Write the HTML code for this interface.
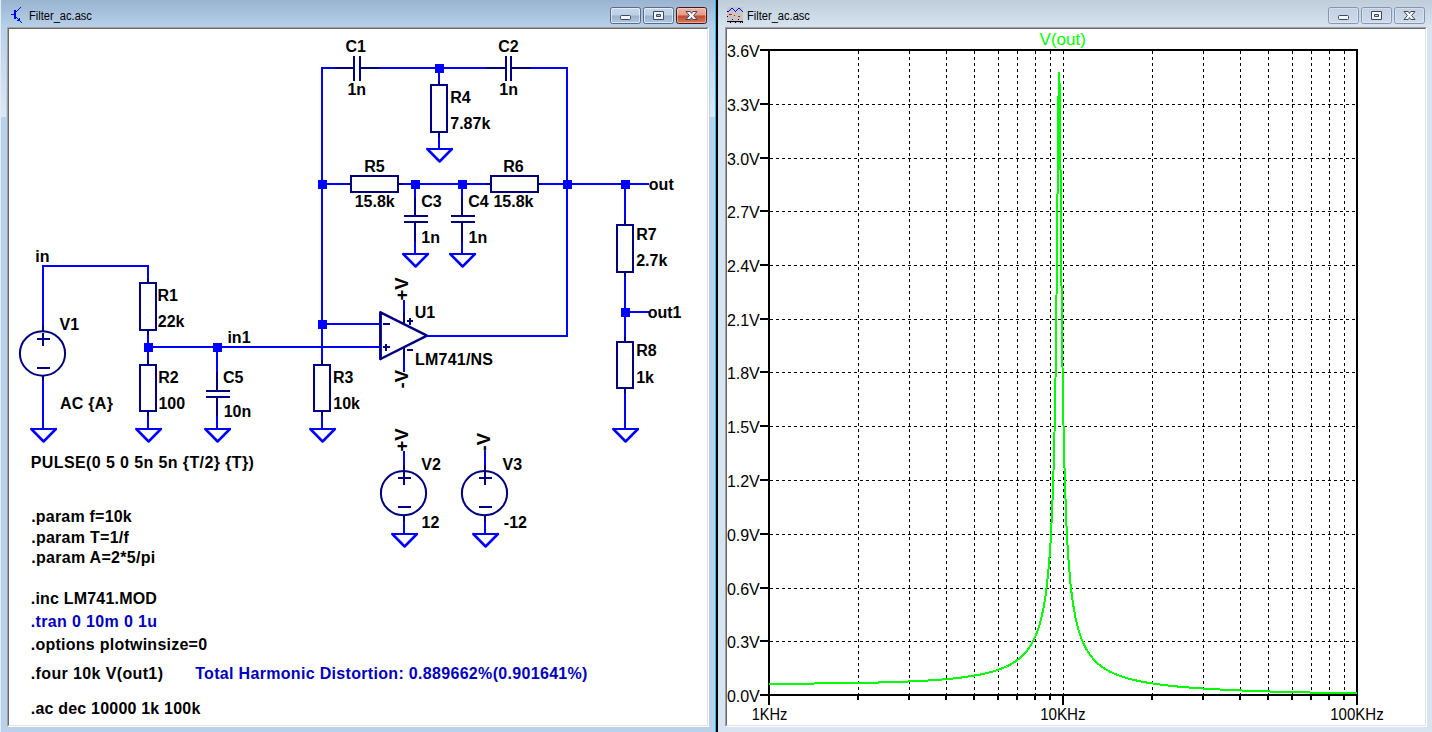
<!DOCTYPE html>
<html><head><meta charset="utf-8"><title>Filter_ac.asc</title>
<style>
html,body{margin:0;padding:0}
body{width:1432px;height:732px;overflow:hidden;position:relative;background:#b9d1ea;font-family:"Liberation Sans",sans-serif}
.win{position:absolute;top:0;height:732px}
.wl{left:0;width:715px;background:linear-gradient(#99b4d1 0,#b9d1ea 28px,#b9d1ea 100%);box-shadow:inset 1px 0 0 #e4edf7}
.wr{left:718px;width:714px;background:linear-gradient(#bfcddb 0,#d7e4f2 28px,#d7e4f2 100%)}
.sep{position:absolute;top:0;height:732px}
.sg{position:absolute;top:28px;width:5px;height:89px;background:linear-gradient(rgba(220,232,245,0),#dce8f5)}
.ttl{position:absolute;top:8px;font-size:12px;line-height:16px;color:#000;white-space:nowrap;transform-origin:0 0;transform:scale(.925,1)}
.cvo{position:absolute;top:27px;height:700px;box-sizing:border-box;border-style:solid;border-width:1px;border-color:#a0a0a0 #fff #fff #a0a0a0}
.cvi{position:absolute;left:0;top:0;right:0;bottom:0;border-style:solid;border-width:1px;border-color:#696969 #e3e3e3 #e3e3e3 #696969;background:#fff;overflow:hidden}
svg{position:absolute;left:0;top:0;display:block}
.sch .t text{font:bold 16px "Liberation Sans",sans-serif;fill:#000}
.sch .t text[fill]{fill:#0000c0}
.sch .t text.rot{font-size:18.5px}
.plt .pl text{font:16px "Liberation Sans",sans-serif}
.btns{position:absolute;top:7px;width:97px;height:17px}
.b{position:absolute;top:0;left:0;width:31px;height:17px;box-sizing:border-box;border:1px solid #5a6b85;border-radius:2.5px;box-shadow:inset 0 0 0 1px rgba(255,255,255,.55);overflow:hidden}
.b.c{width:31px}
.b svg{left:-1px;top:-1px}
.a .b{background:linear-gradient(#c6d6e9 0,#bdd0e6 48%,#99b2cf 52%,#b0c7e1 100%)}
.a .b.c{border-color:#47171f;background:linear-gradient(#eeb4a6 0,#e39a88 48%,#c2492c 52%,#d8785c 100%);box-shadow:inset 0 0 0 1px rgba(255,220,210,.5)}
.i .b{border-color:#8794b0;background:linear-gradient(#c2d0e2,#cedbeb);box-shadow:inset 0 0 0 1px rgba(255,255,255,.3)}
</style></head><body>
<div class="win wl">
<svg width="24" height="24" viewBox="0 0 24 24" style="left:0;top:0" shape-rendering="crispEdges"><g fill="#0000ff"><rect x="14" y="10" width="2" height="9"/><rect x="11" y="14" width="3" height="1"/><rect x="16" y="11" width="1" height="1"/><rect x="17" y="10" width="1" height="1"/><rect x="18" y="9" width="1" height="1"/><rect x="19" y="8" width="1" height="1"/><rect x="20" y="7" width="1" height="1"/><rect x="16" y="17" width="1" height="1"/><rect x="17" y="18" width="1" height="1"/><rect x="18" y="19" width="1" height="1"/><rect x="19" y="20" width="1" height="1"/><rect x="20" y="21" width="1" height="1"/><rect x="21" y="22" width="1" height="1"/><rect x="19" y="18" width="1" height="1"/><rect x="19" y="19" width="1" height="1"/><rect x="18" y="20" width="1" height="1"/><rect x="17" y="20" width="1" height="1"/></g></svg>
<div class="ttl" style="left:29px">Filter_ac.asc</div>
<div class="btns a" style="left:610px">
<div class="b"><svg width="30" height="17" viewBox="0 0 30 17"><rect x="10.5" y="8.5" width="10" height="4" rx="1" fill="#f4f6f9" stroke="#3c4a60"/></svg></div>
<div class="b" style="left:33px"><svg width="30" height="17" viewBox="0 0 30 17"><path d="M10.5 4.5h10v8h-10z M13.5 7.5h4v2h-4z" fill="#f4f6f9" fill-rule="evenodd" stroke="#3c4a60" stroke-linejoin="round"/></svg></div>
<div class="b c" style="left:66px"><svg width="31" height="17" viewBox="0 0 31 17"><path d="M10 4.5h4.2l1.3 1.9 1.3-1.9h4.2l-3.4 4 3.4 4h-4.2l-1.3-1.9-1.3 1.9h-4.2l3.4-4z" fill="#f4f6f9" stroke="#3c4a60" stroke-linejoin="round"/></svg></div>
</div>
<div class="sg" style="left:1px"></div><div class="sg" style="left:710px"></div>
<div class="cvo" style="left:7px;width:702px"><div class="cvi"><svg class="sch" width="698" height="696" viewBox="9 29 698 696">
<g stroke="#000080" stroke-width="2" fill="none" shape-rendering="crispEdges" stroke-linecap="butt">
<line x1="334" y1="68" x2="355" y2="68"/>
<line x1="360" y1="68" x2="381" y2="68"/>
<line x1="354" y1="56" x2="354" y2="81"/>
<line x1="360" y1="56" x2="360" y2="81"/>
<line x1="485" y1="68" x2="507" y2="68"/>
<line x1="511" y1="68" x2="533" y2="68"/>
<line x1="506" y1="56" x2="506" y2="81"/>
<line x1="511" y1="56" x2="511" y2="81"/>
<line x1="439" y1="80" x2="439" y2="86"/>
<line x1="439" y1="132" x2="439" y2="139"/>
<line x1="346" y1="184" x2="352" y2="184"/>
<line x1="398" y1="184" x2="405" y2="184"/>
<line x1="485" y1="184" x2="492" y2="184"/>
<line x1="538" y1="184" x2="544" y2="184"/>
<line x1="415" y1="196" x2="415" y2="217"/>
<line x1="415" y1="222" x2="415" y2="244"/>
<line x1="404" y1="216" x2="428" y2="216"/>
<line x1="404" y1="222" x2="428" y2="222"/>
<line x1="462" y1="196" x2="462" y2="217"/>
<line x1="462" y1="222" x2="462" y2="244"/>
<line x1="451" y1="216" x2="475" y2="216"/>
<line x1="451" y1="222" x2="475" y2="222"/>
<line x1="625" y1="219" x2="625" y2="226"/>
<line x1="625" y1="272" x2="625" y2="279"/>
<line x1="625" y1="336" x2="625" y2="343"/>
<line x1="625" y1="388" x2="625" y2="395"/>
<line x1="383" y1="324" x2="390" y2="324"/>
<line x1="383" y1="347" x2="390" y2="347"/>
<line x1="386" y1="344" x2="386" y2="351"/>
<line x1="404" y1="312" x2="404" y2="325"/>
<line x1="404" y1="347" x2="404" y2="360"/>
<line x1="407" y1="321" x2="413" y2="321"/>
<line x1="410" y1="318" x2="410" y2="325"/>
<line x1="407" y1="350" x2="413" y2="350"/>
<line x1="322" y1="359" x2="322" y2="366"/>
<line x1="322" y1="411" x2="322" y2="418"/>
<line x1="43" y1="324" x2="43" y2="332"/>
<line x1="43" y1="376" x2="43" y2="383"/>
<line x1="37" y1="339" x2="50" y2="339"/>
<line x1="43" y1="333" x2="43" y2="346"/>
<line x1="37" y1="368" x2="50" y2="368"/>
<line x1="148" y1="278" x2="148" y2="284"/>
<line x1="148" y1="330" x2="148" y2="337"/>
<line x1="148" y1="359" x2="148" y2="366"/>
<line x1="148" y1="411" x2="148" y2="418"/>
<line x1="217" y1="371" x2="217" y2="392"/>
<line x1="217" y1="397" x2="217" y2="418"/>
<line x1="206" y1="391" x2="230" y2="391"/>
<line x1="206" y1="397" x2="230" y2="397"/>
<line x1="404" y1="464" x2="404" y2="472"/>
<line x1="404" y1="516" x2="404" y2="523"/>
<line x1="398" y1="478" x2="411" y2="478"/>
<line x1="404" y1="472" x2="404" y2="485"/>
<line x1="398" y1="507" x2="411" y2="507"/>
<line x1="485" y1="464" x2="485" y2="472"/>
<line x1="485" y1="516" x2="485" y2="523"/>
<line x1="479" y1="478" x2="492" y2="478"/>
<line x1="485" y1="472" x2="485" y2="485"/>
<line x1="479" y1="507" x2="492" y2="507"/>
<rect x="431" y="85" width="16" height="47"/>
<rect x="351" y="176" width="47" height="16"/>
<rect x="491" y="176" width="47" height="16"/>
<rect x="617" y="225" width="16" height="47"/>
<rect x="617" y="342" width="16" height="46"/>
<rect x="314" y="365" width="16" height="46"/>
<rect x="140" y="283" width="16" height="47"/>
<rect x="140" y="365" width="16" height="46"/>
</g>
<g stroke="#000080" stroke-width="2" fill="none">
<ellipse cx="42.5" cy="353.48" rx="22.60" ry="22.15"/>
<ellipse cx="403.5" cy="493.16" rx="22.60" ry="22.15"/>
<ellipse cx="484.5" cy="493.16" rx="22.60" ry="22.15"/>
</g>
<g stroke-width="2.5" fill="none" stroke-linejoin="round" stroke-linecap="round">
<polyline stroke="#0000ff" points="427.30,149.00 439.60,161.50 451.90,149.00"/>
<polyline stroke="#0000ff" points="403.30,254.00 415.60,266.50 427.90,254.00"/>
<polyline stroke="#0000ff" points="450.30,254.00 462.60,266.50 474.90,254.00"/>
<polyline stroke="#0000ff" points="613.30,429.00 625.60,441.50 637.90,429.00"/>
<polyline stroke="#000080" points="380.45,312.44 427.01,335.72 380.45,359.00 380.45,312.44"/>
<polyline stroke="#000080" points="380.45,312.44 380.45,359.00"/>
<polyline stroke="#0000ff" points="310.30,429.00 322.60,441.50 334.90,429.00"/>
<polyline stroke="#0000ff" points="31.30,429.00 43.60,441.50 55.90,429.00"/>
<polyline stroke="#0000ff" points="136.30,429.00 148.60,441.50 160.90,429.00"/>
<polyline stroke="#0000ff" points="205.30,429.00 217.60,441.50 229.90,429.00"/>
<polyline stroke="#0000ff" points="392.30,534.00 404.60,546.50 416.90,534.00"/>
<polyline stroke="#0000ff" points="473.30,534.00 485.60,546.50 497.90,534.00"/>
</g>
<g stroke="#0000ff" stroke-width="2" fill="none" shape-rendering="crispEdges" stroke-linecap="butt">
<line x1="321" y1="68" x2="335" y2="68"/>
<line x1="379" y1="68" x2="486" y2="68"/>
<line x1="531" y1="68" x2="568" y2="68"/>
<line x1="322" y1="67" x2="322" y2="360"/>
<line x1="567" y1="67" x2="567" y2="337"/>
<line x1="439" y1="67" x2="439" y2="81"/>
<line x1="439" y1="137" x2="439" y2="150"/>
<line x1="427" y1="149" x2="453" y2="149"/>
<line x1="321" y1="184" x2="347" y2="184"/>
<line x1="403" y1="184" x2="486" y2="184"/>
<line x1="542" y1="184" x2="649" y2="184"/>
<line x1="415" y1="183" x2="415" y2="197"/>
<line x1="415" y1="242" x2="415" y2="255"/>
<line x1="403" y1="254" x2="429" y2="254"/>
<line x1="462" y1="183" x2="462" y2="197"/>
<line x1="462" y1="242" x2="462" y2="255"/>
<line x1="450" y1="254" x2="476" y2="254"/>
<line x1="625" y1="183" x2="625" y2="220"/>
<line x1="625" y1="277" x2="625" y2="337"/>
<line x1="625" y1="393" x2="625" y2="430"/>
<line x1="613" y1="429" x2="639" y2="429"/>
<line x1="624" y1="312" x2="649" y2="312"/>
<line x1="404" y1="300" x2="404" y2="313"/>
<line x1="404" y1="358" x2="404" y2="372"/>
<line x1="321" y1="324" x2="381" y2="324"/>
<line x1="147" y1="347" x2="381" y2="347"/>
<line x1="426" y1="336" x2="568" y2="336"/>
<line x1="322" y1="416" x2="322" y2="430"/>
<line x1="310" y1="429" x2="336" y2="429"/>
<line x1="42" y1="266" x2="149" y2="266"/>
<line x1="43" y1="265" x2="43" y2="325"/>
<line x1="43" y1="381" x2="43" y2="430"/>
<line x1="31" y1="429" x2="57" y2="429"/>
<line x1="148" y1="265" x2="148" y2="279"/>
<line x1="148" y1="335" x2="148" y2="360"/>
<line x1="148" y1="416" x2="148" y2="430"/>
<line x1="136" y1="429" x2="162" y2="429"/>
<line x1="217" y1="346" x2="217" y2="372"/>
<line x1="217" y1="416" x2="217" y2="430"/>
<line x1="205" y1="429" x2="231" y2="429"/>
<line x1="404" y1="451" x2="404" y2="465"/>
<line x1="404" y1="521" x2="404" y2="535"/>
<line x1="392" y1="534" x2="418" y2="534"/>
<line x1="485" y1="451" x2="485" y2="465"/>
<line x1="485" y1="521" x2="485" y2="535"/>
<line x1="473" y1="534" x2="499" y2="534"/>
</g>
<g fill="#0000ff" shape-rendering="crispEdges">
<rect x="435" y="64" width="9" height="9"/>
<rect x="318" y="180" width="9" height="9"/>
<rect x="411" y="180" width="9" height="9"/>
<rect x="458" y="180" width="9" height="9"/>
<rect x="563" y="180" width="9" height="9"/>
<rect x="621" y="180" width="9" height="9"/>
<rect x="621" y="308" width="9" height="9"/>
<rect x="318" y="320" width="9" height="9"/>
<rect x="144" y="343" width="9" height="9"/>
<rect x="213" y="343" width="9" height="9"/>
</g>
<g class="t">
<text id="t0" x="345.48" y="52.0">C1</text>
<text id="t1" x="347.46" y="95.0">1n</text>
<text id="t2" x="498.30" y="52.0">C2</text>
<text id="t3" x="499.34" y="95.0">1n</text>
<text id="t4" x="450.17" y="103.0">R4</text>
<text id="t5" x="450.24" y="129.0">7.87k</text>
<text id="t6" x="364.26" y="172.0">R5</text>
<text id="t7" x="354.67" y="207.0">15.8k</text>
<text id="t8" x="503.13" y="172.0">R6</text>
<text id="t9" x="493.45" y="207.0">15.8k</text>
<text id="t10" x="421.25" y="207.0">C3</text>
<text id="t11" x="468.15" y="207.0">C4</text>
<text id="t12" x="421.24" y="243.0">1n</text>
<text id="t13" x="468.50" y="243.0">1n</text>
<text id="t14" x="636.20" y="240.0">R7</text>
<text id="t15" x="636.18" y="266.0">2.7k</text>
<text id="t16" x="648.83" y="190.0">out</text>
<text id="t17" x="647.74" y="318.0">out1</text>
<text id="t18" x="414.65" y="318.0">U1</text>
<text id="t19" x="414.97" y="365.0" textLength="78.03" lengthAdjust="spacing">LM741/NS</text>
<text id="t20" x="332.90" y="383.0">R3</text>
<text id="t21" x="333.28" y="409.0">10k</text>
<text id="t22" x="636.22" y="356.0">R8</text>
<text id="t23" x="636.18" y="383.0">1k</text>
<text id="t24" x="35.31" y="262.0">in</text>
<text id="t25" x="59.56" y="330.0">V1</text>
<text id="t26" x="59.92" y="409.0" textLength="52.95" lengthAdjust="spacing">AC {A}</text>
<text id="t27" x="157.52" y="301.0">R1</text>
<text id="t28" x="157.74" y="327.0">22k</text>
<text id="t29" x="227.43" y="343.0">in1</text>
<text id="t30" x="158.25" y="383.0">R2</text>
<text id="t31" x="158.40" y="409.0">100</text>
<text id="t32" x="222.95" y="383.0">C5</text>
<text id="t33" x="223.66" y="417.0">10n</text>
<text id="t34" x="421.33" y="470.0">V2</text>
<text id="t35" x="421.59" y="528.0">12</text>
<text id="t36" x="502.53" y="470.0">V3</text>
<text id="t37" x="503.81" y="528.0">-12</text>
<text id="t38" x="30.77" y="468.0" textLength="223.16" lengthAdjust="spacing">PULSE(0 5 0 5n 5n {T/2} {T})</text>
<text id="t39" x="31.16" y="522.0" textLength="100.60" lengthAdjust="spacing">.param f=10k</text>
<text id="t40" x="31.16" y="543.0" textLength="97.72" lengthAdjust="spacing">.param T=1/f</text>
<text id="t41" x="31.16" y="563.0" textLength="124.09" lengthAdjust="spacing">.param A=2*5/pi</text>
<text id="t42" x="30.80" y="604.0" textLength="126.09" lengthAdjust="spacing">.inc LM741.MOD</text>
<text id="t43" x="30.80" y="627.0" textLength="126.29" lengthAdjust="spacing" fill="#0000c0">.tran 0 10m 0 1u</text>
<text id="t44" x="30.80" y="650.0" textLength="176.31" lengthAdjust="spacing">.options plotwinsize=0</text>
<text id="t45" x="30.80" y="679.0" textLength="132.17" lengthAdjust="spacing">.four 10k V(out1)</text>
<text id="t46" x="195.16" y="679.0" textLength="392.28" lengthAdjust="spacing" fill="#0000c0">Total Harmonic Distortion: 0.889662%(0.901641%)</text>
<text id="t47" x="30.80" y="714.0" textLength="169.52" lengthAdjust="spacing">.ac dec 10000 1k 100k</text>
<text id="r0" class="rot" transform="translate(408.4,300.6) rotate(-90)">+V</text>
<text id="r1" class="rot" transform="translate(408.4,388.5) rotate(-90)">-V</text>
<text id="r2" class="rot" transform="translate(408.2,451.6) rotate(-90)">+V</text>
<text id="r3" class="rot" transform="translate(489.6,451.5) rotate(-90)">-V</text>
</g>
</svg></div></div>
</div>
<div class="sep" style="left:715px;width:1px;background:#1fbdf0"></div>
<div class="sep" style="left:716px;width:2px;background:#000"></div>
<div class="win wr">
<svg width="16" height="16" viewBox="0 0 16 16" style="left:9px;top:7px" shape-rendering="crispEdges"><rect width="16" height="16" fill="#c6c6c6"/><g fill="#0000ff"><rect x="1" y="4" width="1" height="1"/><rect x="2" y="3" width="1" height="1"/><rect x="3" y="2" width="1" height="1"/><rect x="4" y="1" width="1" height="1"/><rect x="5" y="1" width="1" height="1"/><rect x="6" y="2" width="1" height="1"/><rect x="7" y="3" width="1" height="1"/><rect x="8" y="4" width="1" height="1"/><rect x="9" y="3" width="1" height="1"/><rect x="10" y="2" width="1" height="1"/><rect x="11" y="1" width="1" height="1"/><rect x="12" y="1" width="1" height="1"/><rect x="13" y="2" width="1" height="1"/><rect x="14" y="3" width="1" height="1"/><rect x="15" y="4" width="1" height="1"/></g><g fill="#ff0000"><rect x="2" y="7" width="1" height="1"/><rect x="3" y="7" width="1" height="1"/><rect x="4" y="7" width="1" height="1"/><rect x="7" y="8" width="1" height="1"/><rect x="11" y="9" width="1" height="1"/><rect x="12" y="9" width="1" height="1"/></g><g fill="#000090"><rect x="5" y="12" width="1" height="1"/><rect x="11" y="12" width="1" height="1"/></g><g fill="#000"><rect x="0" y="4" width="1" height="1"/><rect x="0" y="9" width="1" height="1"/><rect x="3" y="15" width="1" height="1"/><rect x="8" y="15" width="1" height="1"/><rect x="13" y="15" width="1" height="1"/><rect x="15" y="15" width="1" height="1"/></g><rect x="0" y="14" width="16" height="1" fill="#000"/></svg>
<div class="ttl" style="left:29px">Filter_ac.asc</div>
<div class="btns i" style="left:610px">
<div class="b"><svg width="30" height="17" viewBox="0 0 30 17"><rect x="10.5" y="8.5" width="10" height="4" rx="1" fill="#f4f6f9" stroke="#3c4a60"/></svg></div>
<div class="b" style="left:33px"><svg width="30" height="17" viewBox="0 0 30 17"><path d="M10.5 4.5h10v8h-10z M13.5 7.5h4v2h-4z" fill="#f4f6f9" fill-rule="evenodd" stroke="#3c4a60" stroke-linejoin="round"/></svg></div>
<div class="b c" style="left:66px"><svg width="31" height="17" viewBox="0 0 31 17"><path d="M10 4.5h4.2l1.3 1.9 1.3-1.9h4.2l-3.4 4 3.4 4h-4.2l-1.3-1.9-1.3 1.9h-4.2l3.4-4z" fill="#f4f6f9" stroke="#3c4a60" stroke-linejoin="round"/></svg></div>
</div>
<div class="cvo" style="left:7px;width:702px"><div class="cvi"><svg class="plt" width="698" height="696" viewBox="727 29 698 696">
<g stroke="#000" stroke-width="1" stroke-dasharray="3 3" shape-rendering="crispEdges">
<line x1="770" y1="104.5" x2="1356" y2="104.5"/>
<line x1="770" y1="158.5" x2="1356" y2="158.5"/>
<line x1="770" y1="211.5" x2="1356" y2="211.5"/>
<line x1="770" y1="265.5" x2="1356" y2="265.5"/>
<line x1="770" y1="319.5" x2="1356" y2="319.5"/>
<line x1="770" y1="372.5" x2="1356" y2="372.5"/>
<line x1="770" y1="426.5" x2="1356" y2="426.5"/>
<line x1="770" y1="480.5" x2="1356" y2="480.5"/>
<line x1="770" y1="534.5" x2="1356" y2="534.5"/>
<line x1="770" y1="588.5" x2="1356" y2="588.5"/>
<line x1="770" y1="641.5" x2="1356" y2="641.5"/>
<line x1="858.5" y1="51" x2="858.5" y2="694"/>
<line x1="909.5" y1="51" x2="909.5" y2="694"/>
<line x1="946.5" y1="51" x2="946.5" y2="694"/>
<line x1="974.5" y1="51" x2="974.5" y2="694"/>
<line x1="998.5" y1="51" x2="998.5" y2="694"/>
<line x1="1017.5" y1="51" x2="1017.5" y2="694"/>
<line x1="1035.5" y1="51" x2="1035.5" y2="694"/>
<line x1="1050.5" y1="51" x2="1050.5" y2="694"/>
<line x1="1063.5" y1="51" x2="1063.5" y2="694"/>
<line x1="1152.5" y1="51" x2="1152.5" y2="694"/>
<line x1="1203.5" y1="51" x2="1203.5" y2="694"/>
<line x1="1240.5" y1="51" x2="1240.5" y2="694"/>
<line x1="1268.5" y1="51" x2="1268.5" y2="694"/>
<line x1="1292.5" y1="51" x2="1292.5" y2="694"/>
<line x1="1311.5" y1="51" x2="1311.5" y2="694"/>
<line x1="1329.5" y1="51" x2="1329.5" y2="694"/>
<line x1="1344.5" y1="51" x2="1344.5" y2="694"/>
</g>
<g stroke="#000" stroke-width="2" shape-rendering="crispEdges">
<line x1="760" y1="50" x2="769" y2="50"/>
<line x1="760" y1="104" x2="769" y2="104"/>
<line x1="760" y1="158" x2="769" y2="158"/>
<line x1="760" y1="211" x2="769" y2="211"/>
<line x1="760" y1="265" x2="769" y2="265"/>
<line x1="760" y1="319" x2="769" y2="319"/>
<line x1="760" y1="372" x2="769" y2="372"/>
<line x1="760" y1="426" x2="769" y2="426"/>
<line x1="760" y1="480" x2="769" y2="480"/>
<line x1="760" y1="534" x2="769" y2="534"/>
<line x1="760" y1="588" x2="769" y2="588"/>
<line x1="760" y1="641" x2="769" y2="641"/>
<line x1="760" y1="695" x2="769" y2="695"/>
<line x1="769" y1="696" x2="769" y2="705"/>
<line x1="858" y1="696" x2="858" y2="700"/>
<line x1="909" y1="696" x2="909" y2="700"/>
<line x1="946" y1="696" x2="946" y2="700"/>
<line x1="974" y1="696" x2="974" y2="700"/>
<line x1="998" y1="696" x2="998" y2="700"/>
<line x1="1017" y1="696" x2="1017" y2="700"/>
<line x1="1035" y1="696" x2="1035" y2="700"/>
<line x1="1050" y1="696" x2="1050" y2="700"/>
<line x1="1063" y1="696" x2="1063" y2="705"/>
<line x1="1152" y1="696" x2="1152" y2="700"/>
<line x1="1203" y1="696" x2="1203" y2="700"/>
<line x1="1240" y1="696" x2="1240" y2="700"/>
<line x1="1268" y1="696" x2="1268" y2="700"/>
<line x1="1292" y1="696" x2="1292" y2="700"/>
<line x1="1311" y1="696" x2="1311" y2="700"/>
<line x1="1329" y1="696" x2="1329" y2="700"/>
<line x1="1344" y1="696" x2="1344" y2="700"/>
<line x1="1357" y1="696" x2="1357" y2="705"/>
<rect x="769" y="50" width="588" height="645" fill="none"/>
</g>
<polyline fill="none" stroke="#00ff00" stroke-width="2" stroke-linejoin="round" shape-rendering="crispEdges" points="769.0,683.7 769.8,683.7 770.6,683.7 771.4,683.7 772.1,683.7 772.9,683.7 773.7,683.7 774.5,683.7 775.3,683.7 776.1,683.7 776.8,683.7 777.6,683.7 778.4,683.7 779.2,683.7 780.0,683.7 780.8,683.7 781.5,683.7 782.3,683.7 783.1,683.7 783.9,683.7 784.7,683.7 785.5,683.7 786.2,683.6 787.0,683.6 787.8,683.6 788.6,683.6 789.4,683.6 790.2,683.6 791.0,683.6 791.7,683.6 792.5,683.6 793.3,683.6 794.1,683.6 794.9,683.6 795.7,683.6 796.4,683.6 797.2,683.6 798.0,683.6 798.8,683.6 799.6,683.6 800.4,683.6 801.1,683.6 801.9,683.5 802.7,683.5 803.5,683.5 804.3,683.5 805.1,683.5 805.8,683.5 806.6,683.5 807.4,683.5 808.2,683.5 809.0,683.5 809.8,683.5 810.6,683.5 811.3,683.5 812.1,683.5 812.9,683.5 813.7,683.5 814.5,683.4 815.3,683.4 816.0,683.4 816.8,683.4 817.6,683.4 818.4,683.4 819.2,683.4 820.0,683.4 820.7,683.4 821.5,683.4 822.3,683.4 823.1,683.4 823.9,683.4 824.7,683.3 825.4,683.3 826.2,683.3 827.0,683.3 827.8,683.3 828.6,683.3 829.4,683.3 830.2,683.3 830.9,683.3 831.7,683.3 832.5,683.3 833.3,683.3 834.1,683.2 834.9,683.2 835.6,683.2 836.4,683.2 837.2,683.2 838.0,683.2 838.8,683.2 839.6,683.2 840.3,683.2 841.1,683.2 841.9,683.1 842.7,683.1 843.5,683.1 844.3,683.1 845.0,683.1 845.8,683.1 846.6,683.1 847.4,683.1 848.2,683.1 849.0,683.0 849.8,683.0 850.5,683.0 851.3,683.0 852.1,683.0 852.9,683.0 853.7,683.0 854.5,683.0 855.2,682.9 856.0,682.9 856.8,682.9 857.6,682.9 858.4,682.9 859.2,682.9 859.9,682.9 860.7,682.8 861.5,682.8 862.3,682.8 863.1,682.8 863.9,682.8 864.6,682.8 865.4,682.7 866.2,682.7 866.9,682.7 867.6,682.7 868.3,682.7 869.0,682.7 869.6,682.7 870.3,682.6 871.0,682.6 871.7,682.6 872.4,682.6 873.1,682.6 873.8,682.6 874.4,682.6 875.1,682.5 875.8,682.5 876.5,682.5 877.2,682.5 877.9,682.5 878.6,682.5 879.2,682.4 879.9,682.4 880.6,682.4 881.3,682.4 882.0,682.4 882.7,682.3 883.4,682.3 884.1,682.3 884.7,682.3 885.4,682.3 886.1,682.2 886.8,682.2 887.5,682.2 888.2,682.2 888.9,682.2 889.5,682.1 890.2,682.1 890.9,682.1 891.6,682.1 892.3,682.1 893.0,682.0 893.7,682.0 894.3,682.0 895.0,682.0 895.7,681.9 896.4,681.9 897.1,681.9 897.8,681.9 898.5,681.8 899.1,681.8 899.8,681.8 900.5,681.8 901.2,681.7 901.9,681.7 902.6,681.7 903.3,681.7 903.9,681.6 904.6,681.6 905.3,681.6 906.0,681.6 906.7,681.5 907.4,681.5 908.1,681.5 908.7,681.4 909.4,681.4 910.1,681.4 910.8,681.4 911.5,681.3 912.2,681.3 912.9,681.3 913.5,681.2 914.2,681.2 914.9,681.2 915.6,681.1 916.3,681.1 917.0,681.1 917.7,681.0 918.4,681.0 919.0,681.0 919.7,680.9 920.4,680.9 921.1,680.8 921.8,680.8 922.5,680.8 923.2,680.7 923.8,680.7 924.5,680.7 925.2,680.6 925.9,680.6 926.6,680.5 927.3,680.5 928.0,680.5 928.6,680.4 929.3,680.4 930.0,680.3 930.7,680.3 931.4,680.2 932.1,680.2 932.8,680.1 933.4,680.1 934.1,680.0 934.8,680.0 935.5,679.9 936.2,679.9 936.9,679.8 937.6,679.8 938.2,679.7 938.9,679.7 939.6,679.6 940.3,679.6 941.0,679.5 941.7,679.5 942.4,679.4 943.0,679.4 943.7,679.3 944.4,679.2 945.1,679.2 945.8,679.1 946.5,679.1 947.2,679.0 947.9,678.9 948.5,678.9 949.2,678.8 949.9,678.7 950.6,678.7 951.3,678.6 952.0,678.5 952.7,678.5 953.3,678.4 954.0,678.3 954.7,678.3 955.4,678.2 956.1,678.1 956.8,678.0 957.5,678.0 958.1,677.9 958.8,677.8 959.5,677.7 960.2,677.6 960.9,677.5 961.6,677.5 962.3,677.4 962.9,677.3 963.6,677.2 964.3,677.1 965.0,677.0 965.7,676.9 966.4,676.8 967.1,676.7 967.7,676.6 968.4,676.5 969.1,676.4 969.8,676.3 970.5,676.2 971.2,676.1 971.9,676.0 972.5,675.9 973.2,675.8 973.9,675.7 974.6,675.5 975.3,675.4 976.0,675.3 976.7,675.2 977.3,675.1 978.0,674.9 978.7,674.8 979.3,674.7 979.9,674.6 980.5,674.5 981.1,674.3 981.7,674.2 982.2,674.1 982.8,674.0 983.4,673.8 984.0,673.7 984.6,673.6 985.2,673.4 985.8,673.3 986.4,673.2 987.0,673.0 987.5,672.9 988.1,672.7 988.7,672.6 989.3,672.4 989.9,672.3 990.5,672.1 991.1,672.0 991.7,671.8 992.2,671.6 992.8,671.5 993.4,671.3 994.0,671.1 994.6,670.9 995.2,670.8 995.8,670.6 996.4,670.4 996.9,670.2 997.5,670.0 998.1,669.8 998.7,669.6 999.3,669.4 999.9,669.2 1000.5,668.9 1001.1,668.7 1001.7,668.5 1002.2,668.3 1002.8,668.0 1003.4,667.8 1004.0,667.5 1004.5,667.3 1005.0,667.1 1005.5,666.9 1006.0,666.7 1006.5,666.5 1006.9,666.2 1007.4,666.0 1007.9,665.7 1008.4,665.5 1008.9,665.3 1009.4,665.0 1009.9,664.7 1010.4,664.5 1010.9,664.2 1011.4,663.9 1011.8,663.6 1012.3,663.4 1012.8,663.1 1013.3,662.8 1013.8,662.5 1014.3,662.1 1014.8,661.8 1015.3,661.5 1015.8,661.2 1016.3,660.8 1016.7,660.5 1017.2,660.1 1017.7,659.7 1018.2,659.3 1018.6,659.0 1019.0,658.7 1019.4,658.4 1019.8,658.1 1020.2,657.7 1020.6,657.4 1021.0,657.1 1021.4,656.7 1021.7,656.3 1022.1,656.0 1022.5,655.6 1022.9,655.2 1023.3,654.8 1023.7,654.4 1024.1,654.0 1024.5,653.6 1024.9,653.1 1025.3,652.7 1025.7,652.2 1026.1,651.8 1026.4,651.3 1026.8,650.8 1027.2,650.3 1027.6,649.8 1028.0,649.3 1028.4,648.7 1028.7,648.3 1029.0,647.9 1029.3,647.5 1029.6,647.0 1029.9,646.6 1030.2,646.1 1030.5,645.7 1030.8,645.2 1031.1,644.7 1031.3,644.2 1031.6,643.7 1031.9,643.2 1032.2,642.7 1032.5,642.1 1032.8,641.6 1033.1,641.0 1033.4,640.4 1033.7,639.9 1034.0,639.3 1034.3,638.6 1034.6,638.0 1034.9,637.4 1035.2,636.7 1035.5,636.0 1035.8,635.3 1036.0,634.6 1036.3,633.9 1036.6,633.1 1036.8,632.6 1037.0,632.1 1037.2,631.6 1037.4,631.0 1037.6,630.5 1037.8,629.9 1038.0,629.4 1038.2,628.8 1038.4,628.2 1038.6,627.6 1038.8,627.0 1039.0,626.3 1039.2,625.7 1039.4,625.1 1039.6,624.4 1039.8,623.7 1040.0,623.0 1040.2,622.3 1040.4,621.6 1040.6,620.9 1040.8,620.1 1041.0,619.4 1041.1,618.6 1041.3,617.8 1041.5,617.0 1041.7,616.2 1041.9,615.3 1042.1,614.4 1042.3,613.5 1042.5,612.6 1042.7,611.7 1042.9,610.8 1043.1,609.8 1043.3,608.8 1043.5,607.8 1043.7,606.7 1043.9,605.6 1044.1,604.5 1044.3,603.4 1044.5,602.2 1044.7,601.0 1044.8,600.4 1044.9,599.8 1045.0,599.2 1045.1,598.6 1045.2,597.9 1045.3,597.3 1045.4,596.6 1045.5,596.0 1045.6,595.3 1045.7,594.6 1045.8,593.9 1045.8,593.2 1045.9,592.5 1046.0,591.7 1046.1,591.0 1046.2,590.3 1046.3,589.5 1046.4,588.7 1046.5,588.0 1046.6,587.2 1046.7,586.4 1046.8,585.5 1046.9,584.7 1047.0,583.9 1047.1,583.0 1047.2,582.1 1047.3,581.3 1047.4,580.4 1047.5,579.4 1047.6,578.5 1047.7,577.6 1047.8,576.6 1047.9,575.6 1048.0,574.7 1048.1,573.7 1048.2,572.6 1048.3,571.6 1048.4,570.5 1048.5,569.5 1048.6,568.4 1048.7,567.2 1048.8,566.1 1048.9,565.0 1049.0,563.8 1049.1,562.6 1049.2,561.4 1049.3,560.1 1049.4,558.8 1049.5,557.6 1049.6,556.2 1049.7,554.9 1049.8,553.5 1049.9,552.1 1050.0,550.7 1050.1,549.3 1050.2,547.8 1050.3,546.3 1050.4,544.7 1050.5,543.2 1050.6,541.6 1050.7,539.9 1050.8,538.3 1050.8,536.6 1050.9,534.8 1051.0,533.0 1051.1,531.2 1051.2,529.3 1051.3,527.4 1051.4,525.5 1051.5,523.5 1051.6,521.4 1051.7,519.4 1051.8,517.2 1051.9,515.0 1052.0,512.8 1052.1,510.5 1052.2,508.1 1052.3,505.7 1052.4,503.2 1052.5,500.7 1052.6,498.1 1052.7,495.4 1052.8,492.7 1052.9,489.9 1053.0,487.0 1053.1,484.0 1053.2,481.0 1053.3,477.8 1053.4,474.6 1053.5,471.3 1053.6,467.9 1053.7,464.4 1053.8,460.7 1053.9,457.0 1054.0,453.2 1054.1,449.3 1054.2,445.2 1054.3,441.0 1054.4,436.7 1054.5,432.2 1054.6,427.6 1054.7,422.9 1054.8,418.0 1054.9,412.9 1055.0,407.7 1055.1,402.3 1055.2,396.7 1055.3,391.0 1055.4,385.0 1055.5,378.9 1055.6,372.5 1055.7,366.0 1055.7,359.2 1055.8,352.1 1055.9,344.9 1056.0,337.4 1056.1,329.6 1056.2,321.6 1056.3,313.4 1056.4,304.9 1056.5,296.1 1056.6,287.0 1056.7,277.7 1056.8,268.2 1056.9,258.4 1057.0,248.3 1057.1,238.0 1057.2,227.6 1057.3,216.9 1057.4,206.2 1057.5,195.3 1057.6,184.4 1057.7,173.5 1057.8,162.6 1057.9,152.0 1058.0,141.5 1058.1,131.4 1058.2,121.8 1058.3,112.7 1058.4,104.2 1058.5,96.6 1058.6,89.8 1058.7,84.1 1058.8,79.4 1058.9,75.9 1059.0,73.7 1059.1,72.8 1059.3,74.8 1059.4,77.8 1059.5,82.0 1059.6,87.3 1059.7,93.7 1059.8,101.0 1059.9,109.2 1060.0,118.1 1060.1,127.6 1060.2,137.7 1060.3,148.1 1060.4,158.8 1060.5,169.7 1060.5,180.7 1060.6,191.8 1060.7,202.9 1060.8,213.8 1060.9,224.7 1061.0,235.4 1061.1,245.9 1061.2,256.2 1061.3,266.2 1061.4,276.0 1061.5,285.6 1061.6,294.9 1061.7,303.9 1061.8,312.6 1061.9,321.1 1062.0,329.3 1062.1,337.3 1062.2,345.0 1062.3,352.4 1062.4,359.6 1062.5,366.6 1062.6,373.4 1062.7,379.9 1062.8,386.2 1062.9,392.3 1063.0,398.2 1063.1,403.9 1063.2,409.5 1063.3,414.8 1063.4,420.0 1063.5,425.0 1063.6,429.9 1063.7,434.6 1063.8,439.2 1063.9,443.6 1064.0,447.9 1064.1,452.1 1064.2,456.1 1064.3,460.0 1064.4,463.8 1064.5,467.5 1064.6,471.1 1064.7,474.6 1064.8,478.0 1064.9,481.3 1065.0,484.5 1065.1,487.6 1065.2,490.6 1065.3,493.6 1065.4,496.4 1065.5,499.2 1065.5,501.9 1065.6,504.6 1065.7,507.2 1065.8,509.7 1065.9,512.2 1066.0,514.6 1066.1,516.9 1066.2,519.2 1066.3,521.4 1066.4,523.6 1066.5,525.7 1066.6,527.8 1066.7,529.8 1066.8,531.8 1066.9,533.8 1067.0,535.7 1067.1,537.5 1067.2,539.3 1067.3,541.1 1067.4,542.8 1067.5,544.5 1067.6,546.2 1067.7,547.8 1067.8,549.4 1067.9,551.0 1068.0,552.5 1068.1,554.0 1068.2,555.5 1068.3,556.9 1068.4,558.3 1068.5,559.7 1068.6,561.1 1068.7,562.4 1068.8,563.7 1068.9,565.0 1069.0,566.3 1069.1,567.5 1069.2,568.7 1069.3,569.9 1069.4,571.1 1069.5,572.2 1069.6,573.4 1069.7,574.5 1069.8,575.6 1069.9,576.6 1070.0,577.7 1070.1,578.7 1070.2,579.8 1070.3,580.8 1070.3,581.7 1070.4,582.7 1070.5,583.7 1070.6,584.6 1070.7,585.5 1070.8,586.4 1070.9,587.3 1071.0,588.2 1071.1,589.1 1071.2,589.9 1071.3,590.8 1071.4,591.6 1071.5,592.4 1071.6,593.2 1071.7,594.0 1071.8,594.8 1071.9,595.5 1072.0,596.3 1072.1,597.0 1072.2,597.8 1072.3,598.5 1072.4,599.2 1072.5,599.9 1072.6,600.6 1072.7,601.3 1072.8,602.0 1072.9,602.6 1073.0,603.3 1073.1,603.9 1073.2,604.6 1073.3,605.2 1073.4,605.8 1073.5,606.4 1073.6,607.0 1073.8,608.2 1074.0,609.4 1074.2,610.5 1074.4,611.6 1074.6,612.7 1074.8,613.7 1075.0,614.8 1075.2,615.8 1075.3,616.7 1075.5,617.7 1075.7,618.6 1075.9,619.5 1076.1,620.4 1076.3,621.3 1076.5,622.1 1076.7,622.9 1076.9,623.8 1077.1,624.6 1077.3,625.3 1077.5,626.1 1077.7,626.8 1077.9,627.6 1078.1,628.3 1078.3,629.0 1078.5,629.7 1078.7,630.3 1078.9,631.0 1079.1,631.7 1079.3,632.3 1079.5,632.9 1079.7,633.5 1079.9,634.1 1080.1,634.7 1080.2,635.3 1080.4,635.9 1080.6,636.4 1080.8,637.0 1081.0,637.5 1081.2,638.0 1081.4,638.6 1081.6,639.1 1081.9,639.8 1082.2,640.5 1082.5,641.3 1082.8,642.0 1083.1,642.6 1083.4,643.3 1083.7,643.9 1084.0,644.6 1084.3,645.2 1084.6,645.8 1084.9,646.4 1085.1,647.0 1085.4,647.5 1085.7,648.1 1086.0,648.6 1086.3,649.1 1086.6,649.6 1086.9,650.2 1087.2,650.6 1087.5,651.1 1087.8,651.6 1088.1,652.1 1088.4,652.5 1088.7,653.0 1089.0,653.4 1089.3,653.8 1089.6,654.3 1089.9,654.7 1090.2,655.2 1090.6,655.7 1091.0,656.3 1091.4,656.8 1091.8,657.2 1092.2,657.7 1092.6,658.2 1093.0,658.6 1093.4,659.1 1093.8,659.5 1094.2,659.9 1094.6,660.4 1094.9,660.8 1095.3,661.2 1095.7,661.5 1096.1,661.9 1096.5,662.3 1096.9,662.7 1097.3,663.0 1097.7,663.4 1098.1,663.7 1098.5,664.1 1098.9,664.4 1099.3,664.7 1099.7,665.0 1100.0,665.3 1100.5,665.7 1101.0,666.1 1101.5,666.5 1102.0,666.8 1102.5,667.2 1103.0,667.5 1103.5,667.8 1104.0,668.2 1104.5,668.5 1104.9,668.8 1105.4,669.1 1105.9,669.4 1106.4,669.7 1106.9,670.0 1107.4,670.2 1107.9,670.5 1108.4,670.8 1108.9,671.1 1109.4,671.3 1109.8,671.6 1110.3,671.8 1110.8,672.1 1111.3,672.3 1111.8,672.5 1112.3,672.8 1112.8,673.0 1113.3,673.2 1113.8,673.4 1114.3,673.6 1114.7,673.9 1115.3,674.1 1115.9,674.3 1116.5,674.6 1117.1,674.8 1117.7,675.0 1118.3,675.3 1118.9,675.5 1119.4,675.7 1120.0,675.9 1120.6,676.1 1121.2,676.3 1121.8,676.5 1122.4,676.7 1123.0,676.9 1123.6,677.1 1124.2,677.3 1124.7,677.5 1125.3,677.6 1125.9,677.8 1126.5,678.0 1127.1,678.2 1127.7,678.3 1128.3,678.5 1128.9,678.7 1129.4,678.8 1130.0,679.0 1130.6,679.1 1131.2,679.3 1131.8,679.4 1132.4,679.6 1133.0,679.7 1133.6,679.9 1134.1,680.0 1134.7,680.1 1135.3,680.3 1135.9,680.4 1136.5,680.5 1137.1,680.7 1137.7,680.8 1138.3,680.9 1138.9,681.0 1139.4,681.2 1140.0,681.3 1140.6,681.4 1141.2,681.5 1141.8,681.6 1142.4,681.7 1143.1,681.9 1143.8,682.0 1144.4,682.1 1145.1,682.2 1145.8,682.4 1146.5,682.5 1147.2,682.6 1147.9,682.7 1148.6,682.8 1149.2,682.9 1149.9,683.1 1150.6,683.2 1151.3,683.3 1152.0,683.4 1152.7,683.5 1153.4,683.6 1154.0,683.7 1154.7,683.8 1155.4,683.9 1156.1,684.0 1156.8,684.1 1157.5,684.2 1158.2,684.3 1158.8,684.4 1159.5,684.5 1160.2,684.5 1160.9,684.6 1161.6,684.7 1162.3,684.8 1163.0,684.9 1163.6,685.0 1164.3,685.1 1165.0,685.1 1165.7,685.2 1166.4,685.3 1167.1,685.4 1167.8,685.5 1168.4,685.5 1169.1,685.6 1169.8,685.7 1170.5,685.8 1171.2,685.8 1171.9,685.9 1172.6,686.0 1173.2,686.1 1173.9,686.1 1174.6,686.2 1175.3,686.3 1176.0,686.3 1176.7,686.4 1177.4,686.5 1178.1,686.5 1178.7,686.6 1179.4,686.7 1180.1,686.7 1180.8,686.8 1181.5,686.8 1182.2,686.9 1182.9,687.0 1183.5,687.0 1184.2,687.1 1184.9,687.1 1185.6,687.2 1186.3,687.3 1187.0,687.3 1187.7,687.4 1188.3,687.4 1189.0,687.5 1189.7,687.5 1190.4,687.6 1191.1,687.6 1191.8,687.7 1192.5,687.7 1193.1,687.8 1193.8,687.8 1194.5,687.9 1195.2,687.9 1195.9,688.0 1196.6,688.0 1197.3,688.1 1197.9,688.1 1198.6,688.2 1199.3,688.2 1200.0,688.3 1200.7,688.3 1201.4,688.4 1202.1,688.4 1202.7,688.5 1203.4,688.5 1204.1,688.6 1204.8,688.6 1205.5,688.6 1206.2,688.7 1206.9,688.7 1207.5,688.8 1208.2,688.8 1208.9,688.9 1209.6,688.9 1210.3,688.9 1211.0,689.0 1211.7,689.0 1212.4,689.1 1213.0,689.1 1213.7,689.1 1214.4,689.2 1215.1,689.2 1215.8,689.2 1216.5,689.3 1217.2,689.3 1217.8,689.4 1218.5,689.4 1219.2,689.4 1219.9,689.5 1220.6,689.5 1221.3,689.5 1222.0,689.6 1222.6,689.6 1223.3,689.6 1224.0,689.7 1224.7,689.7 1225.4,689.7 1226.1,689.8 1226.8,689.8 1227.4,689.8 1228.1,689.9 1228.8,689.9 1229.5,689.9 1230.2,690.0 1230.9,690.0 1231.6,690.0 1232.2,690.1 1232.9,690.1 1233.6,690.1 1234.3,690.2 1235.0,690.2 1235.7,690.2 1236.4,690.2 1237.0,690.3 1237.7,690.3 1238.4,690.3 1239.1,690.4 1239.8,690.4 1240.5,690.4 1241.2,690.4 1241.8,690.5 1242.5,690.5 1243.2,690.5 1243.9,690.6 1244.6,690.6 1245.3,690.6 1246.0,690.6 1246.7,690.7 1247.3,690.7 1248.0,690.7 1248.7,690.7 1249.4,690.8 1250.1,690.8 1250.8,690.8 1251.5,690.8 1252.1,690.9 1252.8,690.9 1253.5,690.9 1254.2,690.9 1254.9,691.0 1255.6,691.0 1256.3,691.0 1256.9,691.0 1257.6,691.1 1258.3,691.1 1259.0,691.1 1259.7,691.1 1260.4,691.2 1261.1,691.2 1261.7,691.2 1262.4,691.2 1263.1,691.2 1263.8,691.3 1264.5,691.3 1265.2,691.3 1265.9,691.3 1266.5,691.4 1267.2,691.4 1267.9,691.4 1268.6,691.4 1269.3,691.4 1270.0,691.5 1270.7,691.5 1271.3,691.5 1272.0,691.5 1272.7,691.5 1273.4,691.6 1274.1,691.6 1274.8,691.6 1275.5,691.6 1276.2,691.6 1276.8,691.7 1277.5,691.7 1278.2,691.7 1278.9,691.7 1279.6,691.7 1280.3,691.8 1281.0,691.8 1281.6,691.8 1282.3,691.8 1283.0,691.8 1283.7,691.8 1284.4,691.9 1285.1,691.9 1285.8,691.9 1286.4,691.9 1287.1,691.9 1287.8,692.0 1288.5,692.0 1289.2,692.0 1289.9,692.0 1290.6,692.0 1291.2,692.0 1291.9,692.1 1292.6,692.1 1293.3,692.1 1294.0,692.1 1294.7,692.1 1295.4,692.1 1296.0,692.2 1296.7,692.2 1297.4,692.2 1298.1,692.2 1298.8,692.2 1299.5,692.2 1300.2,692.3 1300.8,692.3 1301.5,692.3 1302.2,692.3 1302.9,692.3 1303.6,692.3 1304.3,692.3 1305.0,692.4 1305.6,692.4 1306.3,692.4 1307.0,692.4 1307.7,692.4 1308.4,692.4 1309.1,692.4 1309.8,692.5 1310.4,692.5 1311.1,692.5 1311.8,692.5 1312.6,692.5 1313.4,692.5 1314.2,692.6 1315.0,692.6 1315.7,692.6 1316.5,692.6 1317.3,692.6 1318.1,692.6 1318.9,692.6 1319.7,692.7 1320.4,692.7 1321.2,692.7 1322.0,692.7 1322.8,692.7 1323.6,692.7 1324.4,692.7 1325.2,692.8 1325.9,692.8 1326.7,692.8 1327.5,692.8 1328.3,692.8 1329.1,692.8 1329.9,692.8 1330.6,692.9 1331.4,692.9 1332.2,692.9 1333.0,692.9 1333.8,692.9 1334.6,692.9 1335.3,692.9 1336.1,693.0 1336.9,693.0 1337.7,693.0 1338.5,693.0 1339.3,693.0 1340.0,693.0 1340.8,693.0 1341.6,693.0 1342.4,693.1 1343.2,693.1 1344.0,693.1 1344.8,693.1 1345.5,693.1 1346.3,693.1 1347.1,693.1 1347.9,693.1 1348.7,693.1 1349.5,693.2 1350.2,693.2 1351.0,693.2 1351.8,693.2 1352.6,693.2 1353.4,693.2 1354.2,693.2 1354.9,693.2 1355.7,693.3 1356.5,693.3 1357.0,693.3"/>
<g class="pl">
<text x="759.8" y="57" text-anchor="end">3.6V</text>
<text x="759.8" y="111" text-anchor="end">3.3V</text>
<text x="759.8" y="165" text-anchor="end">3.0V</text>
<text x="759.8" y="218" text-anchor="end">2.7V</text>
<text x="759.8" y="272" text-anchor="end">2.4V</text>
<text x="759.8" y="326" text-anchor="end">2.1V</text>
<text x="759.8" y="379" text-anchor="end">1.8V</text>
<text x="759.8" y="433" text-anchor="end">1.5V</text>
<text x="759.8" y="487" text-anchor="end">1.2V</text>
<text x="759.8" y="541" text-anchor="end">0.9V</text>
<text x="759.8" y="595" text-anchor="end">0.6V</text>
<text x="759.8" y="648" text-anchor="end">0.3V</text>
<text x="759.8" y="702" text-anchor="end">0.0V</text>
<text x="751.70" y="720" textLength="35.6" lengthAdjust="spacingAndGlyphs">1KHz</text>
<text x="1040.15" y="720" textLength="45.5" lengthAdjust="spacingAndGlyphs">10KHz</text>
<text x="1330.25" y="720" textLength="53.4" lengthAdjust="spacingAndGlyphs">100KHz</text>
<text x="1039.6" y="45" textLength="46.3" lengthAdjust="spacingAndGlyphs" fill="#00ff00">V(out)</text>
</g>
</svg></div></div>
</div>
</body></html>
